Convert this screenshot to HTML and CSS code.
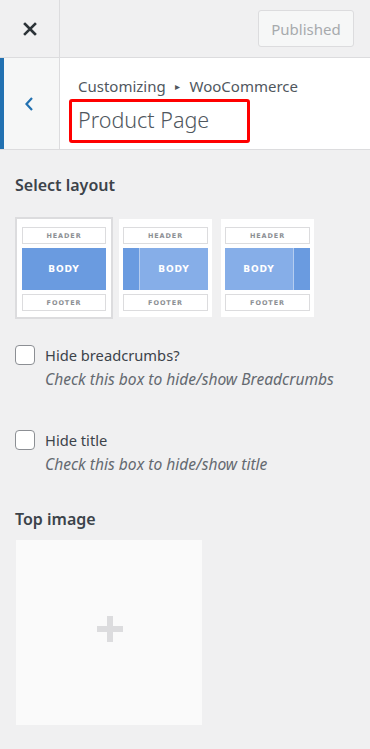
FILE: index.html
```html
<!DOCTYPE html>
<html lang="en">
<head>
  <meta charset="UTF-8" />
  <meta name="viewport" content="width=device-width, initial-scale=1" />
  <title>Customizing Product Page</title>
  <link rel="stylesheet" href="styles.css">
</head>
<body>
  <div class="topbar">
    <button class="close-btn" title="Close">
      <svg width="14" height="14" viewBox="0 0 14 14"><path d="M2 2L12 12M12 2L2 12" stroke="#2c3338" stroke-width="2.6" stroke-linecap="square"/></svg>
    </button>
    <button class="publish-btn" disabled>Published</button>
  </div>

  <div class="section-head">
    <button class="back-btn" title="Back">
      <svg width="10" height="16" viewBox="0 0 10 16"><path d="M8 2L2.5 8L8 14" fill="none" stroke="#2271b1" stroke-width="2.2"/></svg>
    </button>
    <div class="section-title">
      <div class="crumbs">Customizing <span class="arrow">&#9656;</span> WooCommerce</div>
      <h1 class="title-box">Product Page</h1>
    </div>
  </div>

  <div class="panel">
    <h3 class="ctl-title">Select layout</h3>
    <div class="layouts">
      <div class="layout selected">
        <div class="lbox">HEADER</div>
        <div class="lbody full">BODY</div>
        <div class="lbox">FOOTER</div>
      </div>
      <div class="layout">
        <div class="lbox">HEADER</div>
        <div class="lbody"><span class="side"></span><span class="main">BODY</span></div>
        <div class="lbox">FOOTER</div>
      </div>
      <div class="layout">
        <div class="lbox">HEADER</div>
        <div class="lbody"><span class="main">BODY</span><span class="side"></span></div>
        <div class="lbox">FOOTER</div>
      </div>
    </div>

    <label class="check">
      <span class="box"></span>
      <span class="check-text">
        <span class="check-label">Hide breadcrumbs?</span>
        <span class="check-desc">Check this box to hide/show Breadcrumbs</span>
      </span>
    </label>

    <label class="check">
      <span class="box"></span>
      <span class="check-text">
        <span class="check-label">Hide title</span>
        <span class="check-desc">Check this box to hide/show title</span>
      </span>
    </label>

    <h3 class="ctl-title img-title">Top image</h3>
    <div class="image-drop">
      <span class="plus"></span>
    </div>
  </div>
</body>
</html>
```

FILE: styles.css
```css
body {
  font-family: 'Noto Sans', 'Open Sans', sans-serif;
  margin: 0;
  background: #f0f0f1;
  color: #3c434a;
  width: 370px;
  height: 749px;
  overflow: hidden;
}

button {
  font-family: inherit;
  cursor: pointer;
}

.topbar {
  height: 57px;
  border-bottom: 1px solid #dcdcde;
  display: flex;
  align-items: center;
  justify-content: space-between;
}

.close-btn {
  width: 60px;
  height: 57px;
  border: none;
  border-right: 1px solid #dcdcde;
  background: transparent;
  display: flex;
  align-items: center;
  justify-content: center;
  padding: 0 0 0 1px;
}

.publish-btn {
  margin-right: 16px;
  width: 96px;
  height: 37px;
  border: 1px solid #dcdcde;
  border-radius: 3px;
  background: #f6f7f7;
  color: #a7aaad;
  font-size: 15px;
  cursor: default;
}

.section-head {
  height: 91px;
  border-bottom: 1px solid #dcdcde;
  background: #fff;
  display: flex;
}

.back-btn {
  width: 60px;
  border: none;
  border-left: 4px solid #2271b1;
  border-right: 1px solid #dcdcde;
  background: #f6f7f7;
  display: flex;
  align-items: center;
  justify-content: center;
  padding: 0 6px 0 0;
}

.section-title {
  padding: 18px 0 0 18px;
}

.crumbs {
  font-size: 15px;
  color: #50575e;
  line-height: 20px;
}

.arrow {
  font-size: 10px;
  margin: 0 6px 0 5px;
  vertical-align: 2px;
}

.title-box {
  margin: 3px 0 0 -9px;
  width: 181px;
  height: 44px;
  box-sizing: border-box;
  border: 3px solid #f00;
  border-radius: 3px;
  padding: 0 0 0 6px;
  font-size: 21.5px;
  font-weight: 300;
  line-height: 36px;
  color: #50575e;
}

.panel {
  padding: 0 15px;
}

.ctl-title {
  margin: 23px 0 0;
  font-size: 16px;
  font-weight: 600;
  line-height: 24px;
  color: #3c434a;
}

.layouts {
  display: flex;
  gap: 6px;
  margin-top: 20px;
  align-items: center;
}

.layout {
  width: 93px;
  height: 98px;
  box-sizing: border-box;
  background: #fff;
  padding: 8px 4px 6px;
  display: flex;
  flex-direction: column;
  gap: 4px;
}

.layout + .layout + .layout {
  margin-left: 3px;
}

.layout.selected {
  width: 98px;
  height: 102px;
  border: 2px solid #dcdcde;
  padding: 8px 5px 6px 5px;
}

.lbox {
  height: 17px;
  box-sizing: border-box;
  border: 1px solid #dcdcde;
  font-family: 'DejaVu Sans', sans-serif;
  font-size: 6.5px;
  font-weight: bold;
  letter-spacing: 0.9px;
  color: #8c8f94;
  display: flex;
  align-items: center;
  justify-content: center;
}

.lbody {
  height: 42px;
  display: flex;
  color: #fff;
  font-family: 'DejaVu Sans', sans-serif;
  font-size: 9px;
  font-weight: bold;
  letter-spacing: 0.9px;
  background: #86aee8;
}

.lbody.full {
  background: #6a9be0;
  align-items: center;
  justify-content: center;
}

.side {
  width: 16px;
  background: #6a9be0;
  border-right: 1px solid #b5cdf0;
}

.main + .side {
  border-right: none;
  border-left: 1px solid #b5cdf0;
}

.main {
  flex: 1;
  display: flex;
  align-items: center;
  justify-content: center;
}

.check {
  display: flex;
  gap: 10px;
  margin-top: 26px;
}

.check + .check {
  margin-top: 40px;
}

.box {
  width: 20px;
  height: 20px;
  box-sizing: border-box;
  border: 1px solid #8c8f94;
  border-radius: 4px;
  background: #fff;
  flex-shrink: 0;
}

.check-text {
  display: flex;
  flex-direction: column;
}

.check-label {
  font-size: 14.7px;
  line-height: 21px;
  color: #3c434a;
}

.check-desc {
  font-size: 15.6px;
  line-height: 22px;
  font-style: italic;
  color: #646970;
  margin-top: 2px;
}

.img-title {
  margin-top: 32px;
}

.image-drop {
  margin: 9px 0 0 1px;
  width: 186px;
  height: 185px;
  background: #fafafa;
  position: relative;
}

.plus {
  position: absolute;
  left: 81px;
  top: 76px;
  width: 26px;
  height: 26px;
}

.plus::before,
.plus::after {
  content: '';
  position: absolute;
  background: #dcdcde;
}

.plus::before {
  left: 10px;
  top: 0;
  width: 6px;
  height: 26px;
}

.plus::after {
  left: 0;
  top: 10px;
  width: 26px;
  height: 6px;
}
```
